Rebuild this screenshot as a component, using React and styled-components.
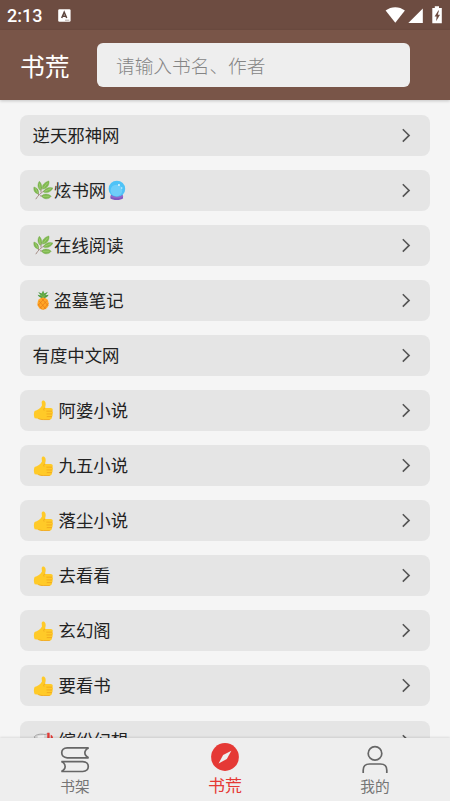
import React from "react";
import styled, { createGlobalStyle } from "styled-components";

const colors = {
  statusBar: "#6d4c41",
  header: "#795548",
  page: "#f5f5f5",
  row: "#e5e5e5",
  field: "#eeeeee",
  text: "#222222",
  hint: "#858585",
  icon: "#666666",
  grey: "#757575",
  red: "#e53935",
};

const sources = [
  { name: "逆天邪神网" },
  { name: "炫书网", icon: "herb", after: "crystal" },
  { name: "在线阅读", icon: "herb" },
  { name: "盗墓笔记", icon: "pineapple" },
  { name: "有度中文网" },
  { name: "阿婆小说", icon: "thumb", spaced: true },
  { name: "九五小说", icon: "thumb", spaced: true },
  { name: "落尘小说", icon: "thumb", spaced: true },
  { name: "去看看", icon: "thumb", spaced: true },
  { name: "玄幻阁", icon: "thumb", spaced: true },
  { name: "要看书", icon: "thumb", spaced: true },
  { name: "缤纷幻想", icon: "megaphone", spaced: true },
];

const Herb = () => (
  <Emoji viewBox='0 0 22 22'>
    <path d='M3 20.6C5 17 8.5 13.5 14 10.5M6 16.2L4.6 9.5M8.5 13.3L9 7.5M7.5 17L13 17.3' fill='none' stroke='#a1887f' strokeWidth='1' />
    <g fill='#7fb950' stroke='#6fa544' strokeWidth='0.4'>
      <path d='M5.6 15C1.4 14 .4 10.8 1 7.5C4.8 8.6 6.6 11.5 5.6 15Z' />
      <path d='M7.9 11.2C4.6 8.5 4.7 4.2 6.8 1.4C9.7 4.4 10.3 8.2 7.9 11.2Z' />
      <path d='M10.2 9.9C9 5.6 12.2 2.4 17.1 1C17.9 5.3 15.2 9 10.2 9.9Z' />
      <path d='M11.2 12.9C12.3 8.8 17.3 6.8 21.4 8.6C19.4 12.6 15.5 14.6 11.2 12.9Z' />
      <path d='M9.2 17.4C11.3 14.3 16.4 14.4 19.6 17.5C16.6 21.2 12 21 9.2 17.4Z' />
    </g>
    <path d='M2.6 9L5.2 14M7 4L7.7 10M15.7 3L11 9M19.2 9.3L12.3 12.2M17.5 17.5H10.8' fill='none' stroke='#a5d376' strokeWidth='0.8' />
  </Emoji>
);

const Pineapple = () => (
  <Emoji viewBox='0 0 22 22'>
    <path d='M10.8 9C7.4 8.6 5.8 7.2 5 5.2L8.3 6L5.6 2.2L9.3 3.7L10.8 .6L12.2 3.7L16 2L13.5 5.7L16.8 5.2C15.7 7.6 13.8 8.8 10.8 9Z' fill='#4f9b45' />
    <path d='M10.8 2.5V8M8 4.3L10.5 8M13.9 4L11.2 8' stroke='#8bc34a' fill='none' strokeWidth='0.8' />
    <ellipse cx='10.8' cy='14.7' rx='6' ry='6.6' fill='#ffa726' />
    <path d='M6.4 11.5L13.8 20.5M9.2 9L16.3 17M5.2 15L9.8 20.8M15.3 11L7.4 19.8M12.4 8.8L5.4 16.6M16.5 14.2L11.4 20.9' stroke='#e67716' strokeWidth='0.7' />
  </Emoji>
);

const Crystal = () => (
  <Emoji viewBox='0 0 22 22'>
    <path d='M5.3 15.5H17.7L18.4 19.6C16 22.2 7 22.2 4.6 19.6Z' fill='#7e57c2' />
    <circle cx='11.7' cy='9.6' r='8.9' fill='#4fc3f7' />
    <circle cx='11.2' cy='11.2' r='6.2' fill='#81d4fa' opacity='0.65' />
    <path d='M5.2 17.2C9 19.2 14.4 19.2 18.2 17.2' fill='none' stroke='#9268c8' strokeWidth='1.6' />
    <circle cx='13.9' cy='5.4' r='1.1' fill='#e1f5fe' />
    <circle cx='16.9' cy='8.6' r='0.7' fill='#e1f5fe' />
  </Emoji>
);

const Thumb = () => (
  <Emoji viewBox='0 0 22 22'>
    <path d='M1.7 11.9C4.7 11.3 8.3 8.8 9.6 5.9L9.3 2.2C9.6 -.1 12.4 0 13.2 2.2C14 4.6 13.5 6.6 12.8 8.6H19C21.4 8.6 21.8 11.2 20.5 12C21.9 12.9 21.7 14.4 20.5 15C21.4 15.9 21.2 17.2 20.1 17.8C20.8 19.3 19.7 21.2 17.7 21.2H10.8C7.6 21.2 5.8 20 1.8 19.7C.7 17.2 .6 14.2 1.7 11.9Z' fill='#ffca28' />
    <path d='M12.8 8.6C11.4 8.9 11.2 10 11.7 10.9M20.5 12H14.8M20.5 15H14.9M20.1 17.8H15.2M6 20.1C8 20.8 9 21 11 21H17.6' fill='none' stroke='#efa51c' strokeWidth='0.9' strokeLinecap='round' />
  </Emoji>
);

const Megaphone = () => (
  <Emoji viewBox='0 0 22 22'>
    <path d='M1.5 6.2C3.5 3.2 9 3 13 3.8L17 2.5V18L11 14L3 11Z' fill='#d8d8d8' stroke='#a0a0a0' strokeWidth='1' />
    <path d='M5 5.4L12 4.5V13L5 11Z' fill='#f5f5f5' />
    <path d='M15.3 1.8H17.8V18L15.3 16Z' fill='#e53935' />
    <path d='M19 4C22 5 22.5 9 19 12Z' fill='#e53935' />
  </Emoji>
);

const emojis = {
  herb: Herb,
  pineapple: Pineapple,
  crystal: Crystal,
  thumb: Thumb,
  megaphone: Megaphone,
};

const SourceRow = ({ name, icon, after, spaced }) => {
  const Before = emojis[icon];
  const After = emojis[after];

  return (
    <Row>
      {Before && <Before />}
      <RowName $spaced={spaced}>{name}</RowName>
      {After && <After />}
      <Chevron viewBox='0 0 10 16'>
        <path d='M1.8 2.2L8.1 8.4L1.8 14.6' />
      </Chevron>
    </Row>
  );
};

const App = () => (
  <Screen>
    <GlobalStyle />
    <StatusBar>
      <Clock>2:13</Clock>
      <svg width='13' height='13' viewBox='0 0 13 13'>
        <rect x='.2' y='.2' width='12.4' height='12.5' rx='1.3' fill='#fff' />
        <path d='M3.7 9L6.2 3.2L8.7 9M4.6 7.2H7.8' fill='none' stroke='#5d463e' strokeWidth='1.5' />
        <path d='M7 11.2H11.3' stroke='#b5aaa6' strokeWidth='1' />
      </svg>
      <StatusIcons viewBox='0 0 58 18'>
        <path d='M.6 4.6C6.2.1 14.3.1 19.9 4.6L10.3 16.8Z' />
        <path d='M37.8 2.4V17H23.3Z' />
        <path d='M49.8 .2H54V1.9H56.8V17.2H47.3V1.9H49.8Z' />
        <path d='M53.3 4.6L49.6 10.4H51.6L51.1 15.2L55 8.8H52.8L54 4.6Z' fill={colors.statusBar} />
      </StatusIcons>
    </StatusBar>
    <Header>
      <Title>书荒</Title>
      <Search placeholder='请输入书名、作者' />
    </Header>
    <List>
      {sources.map((source) => (
        <SourceRow key={source.name} {...source} />
      ))}
    </List>
    <Nav>
      <NavItem>
        <NavIcon viewBox='0 0 30 30'>
          <path d='M28.6 2.9H7.2C-.1 2.9-.1 12.8 7.2 12.8H28.6C23.6 10.4 23.6 5.3 28.6 2.9Z' />
          <path d='M1.4 16.6H22.8C30.1 16.6 30.1 26.5 22.8 26.5H1.4C6.4 24.1 6.4 19 1.4 16.6Z' />
        </NavIcon>
        <NavLabel>书架</NavLabel>
      </NavItem>
      <NavItem $active>
        <NavIcon viewBox='0 0 30 30'>
          <circle cx='15' cy='15' r='13.9' fill={colors.red} stroke='none' />
          <path d='M21.4 8.8L16.8 17.1L8.6 21.4L13.1 13.1Z' fill='#eee' stroke='none' />
        </NavIcon>
        <NavLabel $active>书荒</NavLabel>
      </NavItem>
      <NavItem>
        <NavIcon viewBox='0 0 30 30'>
          <circle cx='15' cy='8.4' r='6.8' />
          <path d='M3.2 28V25.2C3.2 21.2 5.8 19 9.6 19H20.4C24.2 19 26.8 21.2 26.8 25.2V28' />
        </NavIcon>
        <NavLabel>我的</NavLabel>
      </NavItem>
    </Nav>
  </Screen>
);

const GlobalStyle = createGlobalStyle`
  * {
    box-sizing: border-box;
  }

  body {
    margin: 0;
    font-family: "Noto Sans CJK SC", sans-serif;
  }
`;

const Screen = styled.div`
  background-color: ${colors.page};
  color: ${colors.text};
  display: flex;
  flex-direction: column;
  height: 801px;
  overflow: hidden;
  width: 450px;
`;

const StatusBar = styled.div`
  align-items: center;
  background-color: ${colors.statusBar};
  display: flex;
  flex: none;
  height: 30px;
  padding: 0 7px 0 7px;
`;

const Clock = styled.span`
  color: #ffffff;
  font-family: Roboto, sans-serif;
  font-size: 18px;
  font-weight: 500;
  line-height: 30px;
  padding-top: 2px;
  width: 51px;
`;

const StatusIcons = styled.svg`
  fill: #ffffff;
  height: 18px;
  margin-left: auto;
  width: 58px;
`;

const Header = styled.header`
  align-items: center;
  background-color: ${colors.header};
  box-shadow: 0 1px 3px rgba(0, 0, 0, 0.2);
  display: flex;
  flex: none;
  height: 70px;
  padding: 0 40px 0 20px;
  z-index: 1;
`;

const Title = styled.h1`
  color: #ffffff;
  font-size: 24.8px;
  font-weight: 400;
  line-height: 36px;
  margin: 0;
  width: 77px;
`;

const Search = styled.input`
  background-color: ${colors.field};
  border: none;
  border-radius: 6px;
  color: ${colors.text};
  flex: 1;
  font-family: inherit;
  font-size: 18.7px;
  height: 44px;
  min-width: 0;
  outline: none;
  padding: 0 19px 2px;

  &::placeholder {
    color: ${colors.hint};
    font-weight: 300;
    opacity: 1;
  }
`;

const List = styled.main`
  display: flex;
  flex: 1;
  flex-direction: column;
  gap: 14.55px;
  min-height: 0;
  overflow: hidden;
  padding: 15px 20px 0;
`;

const Row = styled.div`
  align-items: center;
  background-color: ${colors.row};
  border-radius: 8px;
  display: flex;
  flex: none;
  height: 40.5px;
  padding: 0 19px 0 12.5px;
`;

const RowName = styled.span`
  font-size: 17.4px;
  line-height: 40px;
  margin-bottom: 1px;
  margin-left: ${(props) => (props.$spaced ? "4.5px" : "0")};
`;

const Emoji = styled.svg`
  flex: none;
  height: 20.5px;
  margin: 0.5px 1px 0 0;
  width: 20.5px;
`;

const Chevron = styled.svg`
  fill: none;
  height: 16px;
  margin-bottom: 0.5px;
  margin-left: auto;
  stroke: #555555;
  stroke-width: 1.6;
  width: 10px;
`;

const Nav = styled.nav`
  background-color: ${colors.field};
  box-shadow: 0 -1px 2px rgba(0, 0, 0, 0.1);
  display: flex;
  flex: none;
  height: 63px;
  z-index: 1;
`;

const NavItem = styled.div`
  align-items: center;
  color: ${(props) => (props.$active ? colors.red : colors.grey)};
  display: flex;
  flex: 1;
  flex-direction: column;
  padding-top: ${(props) => (props.$active ? "4px" : "7px")};
`;

const NavIcon = styled.svg`
  fill: none;
  flex: none;
  height: 30px;
  stroke: ${colors.icon};
  stroke-width: 1.7;
  width: 30px;
`;

const NavLabel = styled.span`
  font-size: ${(props) => (props.$active ? "17px" : "14.7px")};
  line-height: ${(props) => (props.$active ? "26px" : "22px")};
`;

export default App;
